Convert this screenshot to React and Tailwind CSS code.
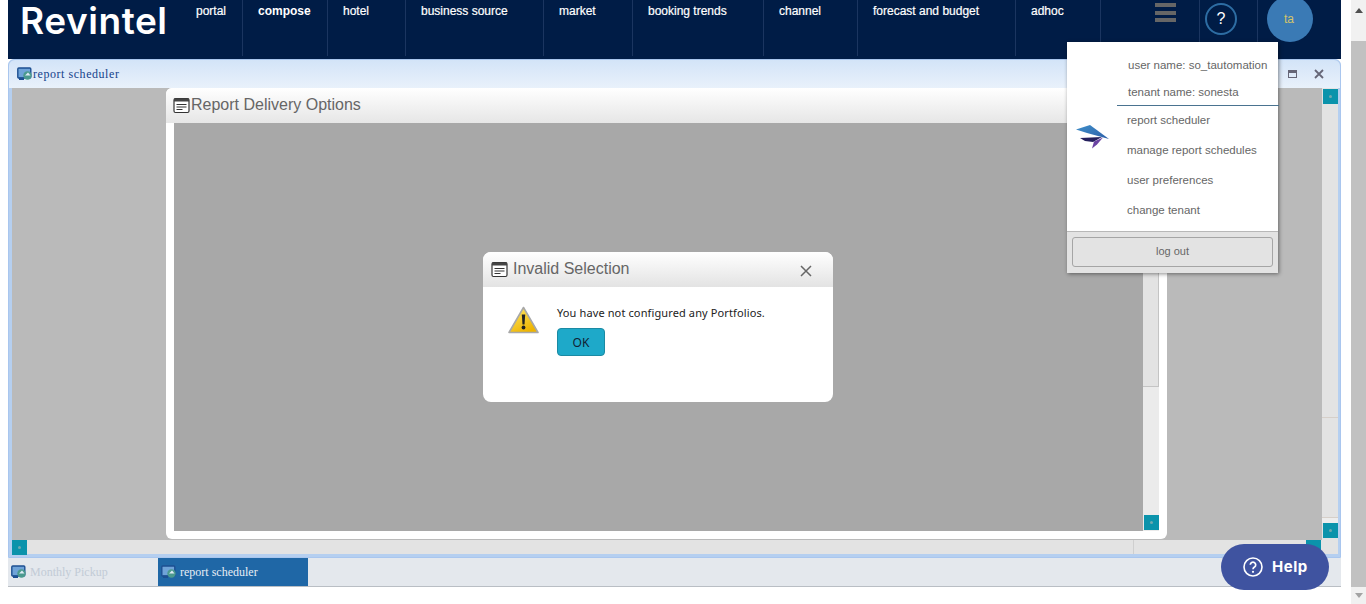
const navItems = [
  { label: "portal", left: 196, width: 47 },
  { label: "compose", left: 258, width: 70, bold: true },
  { label: "hotel", left: 343, width: 63 },
  { label: "business source", left: 421, width: 123 },
  { label: "market", left: 559, width: 74 },
  { label: "booking trends", left: 648, width: 116 },
  { label: "channel", left: 779, width: 79 },
  { label: "forecast and budget", left: 873, width: 143 },
  { label: "adhoc", left: 1031, width: 70 },
]

function WindowIcon() {
  return (
    <svg width="17" height="17" viewBox="0 0 17 17" className="shrink-0">
      <rect x="1" y="1.5" width="15" height="14" rx="1.5" fill="#fff" stroke="#333" strokeWidth="1.2" />
      <rect x="1" y="1.5" width="15" height="3" fill="#444" />
      <path d="M3.5 7.5h10M3.5 10h10M3.5 12.5h6" stroke="#333" strokeWidth="1" />
    </svg>
  )
}

function AppIcon({ className }) {
  return (
    <svg width="16" height="14" viewBox="0 0 16 14" className={className}>
      <rect x="0.8" y="1" width="13" height="10" rx="1" fill="#6fa3d8" stroke="#1d4f91" strokeWidth="1.4" />
      <rect x="2" y="10.5" width="5" height="2.5" fill="#1d4f91" />
      <circle cx="10.5" cy="8.5" r="4.2" fill="#4b9a8e" />
      <path d="M8 8.5l3-3 2.5 3z" fill="#dfeaf5" />
    </svg>
  )
}

function ScrollArrow() {
  return (
    <div className="w-[15px] h-[15px] bg-[#0b93ab] flex items-center justify-center shrink-0">
      <div className="w-[3px] h-[3px] rounded-full bg-[#6fa8ae]" />
    </div>
  )
}

export default function App() {
  return (
    <div className="relative w-[1366px] h-[604px] overflow-hidden bg-white flex font-['Liberation_Sans',Arial,sans-serif]">
      <div className="w-[1351px] h-full pl-2 pr-[10px] flex flex-col">
        {/* top nav */}
        <div className="relative h-[59px] bg-[#001c46] shrink-0">
          <div className="absolute left-[12px] top-[2px] text-white text-[37px] leading-[37px] font-semibold font-['Inter',sans-serif] tracking-[0.55px]">
            Revintel
          </div>
          <div className="absolute left-0 top-0 h-[56px] w-full">
            {navItems.map((n) => (
              <div
                key={n.label}
                style={{ left: n.left - 8, width: n.width }}
                className={`absolute top-0 h-[56px] border-r border-[#1b3560] pt-[4px] text-[12px] leading-[15px] text-white ${n.bold ? "font-bold" : "[-webkit-text-stroke:0.2px_white]"}`}
              >
                {n.label}
              </div>
            ))}
            <div className="absolute left-[1191px] top-0 h-[56px] border-l border-[#1b3560]" />
            <div className="absolute left-[1249px] top-0 h-[56px] border-l border-[#1b3560]" />
          </div>
          {/* hamburger */}
          <div className="absolute left-[1147px] top-[3px] w-[21px] flex flex-col gap-[3.5px]">
            <div className="h-[4px] bg-[#666]" />
            <div className="h-[4px] bg-[#666]" />
            <div className="h-[4px] bg-[#666]" />
          </div>
          <div className="absolute left-[1197px] top-[3px] w-[32px] h-[32px] rounded-full border-2 border-[#2d6da3] text-white text-[16px] flex items-center justify-center">
            ?
          </div>
          <div className="absolute left-[1259px] top-[-4px] w-[46px] h-[46px] rounded-full bg-[#3a7ab5] text-[#d5c46a] text-[12px] flex items-center justify-center pr-[2px]">
            ta
          </div>
        </div>

        {/* window */}
        <div className="relative h-[499px] shrink-0 rounded-t-[6px] bg-[#b5cff0] border border-[#a9c6ee] flex flex-col">
          <div className="h-[28px] shrink-0 rounded-t-[6px] bg-gradient-to-b from-[#d3e4f8] to-[#e9f1fb] flex items-center pl-[8px] font-['Liberation_Serif',serif] text-[12px] tracking-[0.55px] text-[#15428b]">
            <AppIcon />
            <span>report scheduler</span>
            <div className="ml-auto flex items-center gap-[17px] pr-[16px]">
              <div className="w-[9px] h-[8px] border border-[#667] border-t-[3px]" />
              <svg width="10" height="10" viewBox="0 0 10 10">
                <path d="M1 1l8 8M9 1l-8 8" stroke="#667" strokeWidth="1.8" />
              </svg>
            </div>
          </div>
          <div className="flex flex-1 min-h-0 pl-[3px] pr-[2px]">
            <div className="flex-1 flex flex-col min-w-0">
              <div className="flex-1 bg-[#bababa]" />
              <div className="h-[14px] flex bg-[#e3e3e3] relative mb-[3px] shrink-0">
                <ScrollArrow />
                <div className="w-[1107px] border-r border-[#cfcfcf] bg-[#e3e3e3]" />
                <div className="absolute left-[1294px] top-0"><ScrollArrow /></div>
              </div>
            </div>
            <div className="w-[16px] flex flex-col bg-[#e3e3e3] pt-[1px] pl-[1px] mb-[3px]">
              <ScrollArrow />
              <div className="flex-1" />
              <div className="h-[101px] -ml-[1px] border-y border-[#d6cfc9]" />
              <div className="h-[5px] -ml-[1px] bg-[#ededed]" />
              <ScrollArrow />
              <div className="h-[16px] shrink-0" />
            </div>
          </div>
        </div>

        {/* taskbar */}
        <div className="h-[29px] shrink-0 bg-[#e4e8ed] border-b border-[#b9bec4] flex font-['Liberation_Serif',serif] text-[12px]">
          <div className="w-[150px] flex items-center pl-[3px] text-[#c2cbd6]">
            <AppIcon />
            <span className="ml-[3px]">Monthly Pickup</span>
          </div>
          <div className="w-[150px] bg-[#1f67a6] flex items-center pl-[3px] text-[#e8eef5]">
            <AppIcon />
            <span className="ml-[3px]">report scheduler</span>
          </div>
        </div>
      </div>

      {/* page scrollbar */}
      <div className="w-[15px] h-full bg-[#f1f1f1] flex flex-col">
        <div className="h-[17px] flex items-center justify-center pt-[3px]">
          <div className="border-x-[4px] border-x-transparent border-b-[5px] border-b-[#505050]" />
        </div>
        <div className="mt-[24px] h-[546px] bg-[#c1c1c1]" />
        <div className="flex-1 flex items-center justify-center">
          <div className="border-x-[4px] border-x-transparent border-t-[5px] border-t-[#a3a3a3]" />
        </div>
      </div>

      {/* report delivery window */}
      <div className="absolute left-[166px] top-[88px] w-[1001px] h-[451px] bg-white rounded-[6px] overflow-hidden flex flex-col">
        <div className="h-[35px] shrink-0 bg-gradient-to-b from-white to-[#e6e6e6] flex items-center pl-[7px] text-[16px] text-[#666]">
          <WindowIcon />
          <span className="ml-[1px] -mt-[2px]">Report Delivery Options</span>
        </div>
        <div className="flex flex-1 min-h-0 pl-[8px] pr-[8px] pb-[8px]">
          <div className="flex-1 bg-[#a8a8a8]" />
          <div className="w-[16px] bg-[#ebebeb] flex flex-col">
            <div className="h-[264px] w-[15.5px] bg-[#e3e3e3] border-b border-r border-[#c4c4c4]" />
            <div className="flex-1" />
            <div className="pl-[1px] pb-[1px]"><ScrollArrow /></div>
          </div>
        </div>
      </div>

      {/* invalid selection dialog */}
      <div className="absolute left-[483px] top-[252px] w-[350px] h-[150px] bg-white rounded-[8px] overflow-hidden flex flex-col">
        <div className="h-[35px] shrink-0 bg-gradient-to-b from-white to-[#e3e3e3] flex items-center pl-[8px] text-[16px] text-[#666]">
          <WindowIcon />
          <span className="ml-[5px] -mt-[2px]">Invalid Selection</span>
          <svg width="12" height="12" viewBox="0 0 12 12" className="ml-auto mr-[21px] mt-[2px]">
            <path d="M1 1l10 10M11 1l-10 10" stroke="#666" strokeWidth="1.5" />
          </svg>
        </div>
        <div className="flex pl-[25px] pt-[19px]">
          <svg width="31" height="28" viewBox="0 0 31 28" className="shrink-0">
            <defs>
              <linearGradient id="warn" x1="0" y1="0" x2="0.6" y2="1">
                <stop offset="0" stopColor="#ffe96a" />
                <stop offset="1" stopColor="#eeb400" />
              </linearGradient>
            </defs>
            <path d="M15.5 1.5L30 26.5H1z" fill="url(#warn)" stroke="#a8a8a8" strokeWidth="1.6" strokeLinejoin="round" />
            <path d="M13.8 8.5h3.4l-.7 10h-2z" fill="#222" />
            <circle cx="15.5" cy="21.5" r="1.9" fill="#222" />
          </svg>
          <div className="ml-[18px] -mt-[1px]">
            <div className="text-[11px] leading-[16px] text-[#222] tracking-[0.12px] font-['Noto_Sans',sans-serif]">
              You have not configured any Portfolios.
            </div>
            <div className="mt-[7px] w-[48px] h-[28px] pt-[1px] rounded-[4px] bg-[#1ea9c9] border border-[#1b8aa3] text-[12px] text-[#123] flex items-center justify-center font-['Noto_Sans',sans-serif]">
              OK
            </div>
          </div>
        </div>
      </div>

      {/* user menu */}
      <div className="absolute left-[1067px] top-[42px] w-[211px] h-[231px] bg-[#e3e3e3] shadow-[1px_1px_4px_rgba(0,0,0,0.45)] flex flex-col text-[11.5px] text-[#666]">
        <div className="h-[190px] bg-white border-b border-[#b8b8b8] relative shrink-0">
          <div className="ml-[50px] h-[64px] border-b border-[#4a7390] mr-[-1px] pl-[11px] pt-[16px] leading-[15px]">
            <div>user name: so_tautomation</div>
            <div className="mt-[12px]">tenant name: sonesta</div>
          </div>
          <div className="ml-[60px] flex flex-col leading-[15px] pt-[7px] gap-[15px]">
            <div>report scheduler</div>
            <div>manage report schedules</div>
            <div>user preferences</div>
            <div>change tenant</div>
          </div>
          <svg width="34" height="25" viewBox="0 0 34 25" className="absolute left-[9px] top-[82px]">
            <defs>
              <linearGradient id="wing" x1="0" y1="0" x2="1" y2="1">
                <stop offset="0" stopColor="#3f8fc9" />
                <stop offset="1" stopColor="#2c5ea8" />
              </linearGradient>
            </defs>
            <path d="M0 5.5L14 1l19 14-22-6z" fill="url(#wing)" />
            <path d="M4 14l22-1-9 5-8-1z" fill="#241f5c" />
            <path d="M27 13.5l-9 4-2 7 5-4z" fill="#6b44a3" />
          </svg>
        </div>
        <div className="mx-[5px] mt-[5px] h-[30px] pb-[2px] rounded-[3px] border border-[#a5a5a5] flex items-center justify-center text-[11px] bg-[#e3e3e3]">
          log out
        </div>
      </div>

      {/* help button */}
      <div className="absolute left-[1221px] top-[544px] w-[108px] h-[46px] rounded-[23px] bg-[#3f53a0] flex items-center pl-[22px] gap-[9px] text-white font-bold text-[15px] tracking-[0.5px] font-['Inter',sans-serif]">
        <svg width="20" height="20" viewBox="0 0 20 20" className="shrink-0">
          <circle cx="10" cy="10" r="9" fill="none" stroke="white" strokeWidth="1.6" />
          <path d="M7.3 7.8a2.7 2.7 0 1 1 4.2 2.3c-1 .6-1.5 1.1-1.5 2.1" fill="none" stroke="white" strokeWidth="1.7" />
          <circle cx="10" cy="14.8" r="1.1" fill="white" />
        </svg>
        Help
      </div>
    </div>
  )
}
